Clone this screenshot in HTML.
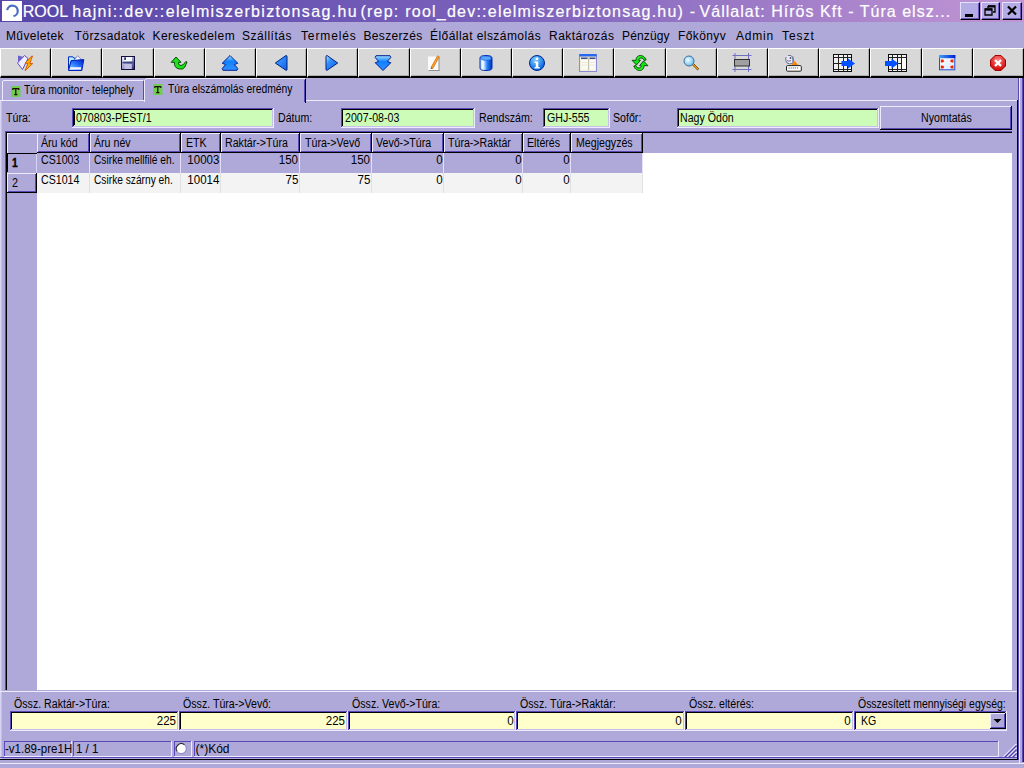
<!DOCTYPE html><html><head><meta charset="utf-8"><style>
*{margin:0;padding:0;box-sizing:border-box}
html,body{width:1024px;height:768px;overflow:hidden;background:#aea9d8;font-family:"Liberation Sans",sans-serif;font-size:11px;color:#000}
.a{position:absolute}
.t{position:absolute;white-space:nowrap;line-height:14px}
#title{left:0;top:0;width:1024px;height:22px;background:linear-gradient(to right,#5646a8 0%,#7c62bc 50%,#c296d4 100%)}
#ttext{left:24px;top:1px;height:20px;color:#fff;font-size:16px;letter-spacing:1px;line-height:20px;white-space:nowrap}
.tb{position:absolute;top:2px;width:20px;height:18px;background:#b4ace4;border-top:1px solid #e4e0ff;border-left:1px solid #e4e0ff;border-right:1px solid #000;border-bottom:1px solid #000;box-shadow:inset -1px -1px 0 #6858b8}
.mi{top:28px;font-size:12px}
.btn{position:absolute;top:48px;height:30px;background:#d8d8d8;border-top:1px solid #fff;border-left:1px solid #fff;border-right:1px solid #000;border-bottom:2px solid #000;box-shadow:inset -1px -1px 0 #b0b0b0}
svg.ic{position:absolute;overflow:visible}
.lbl{top:111px;font-size:12px}
.inp{position:absolute;top:108px;height:20px;background:#ccfcb8;border-top:2px solid #201860;border-left:2px solid #201860;border-bottom:1px solid #e0e0ff;border-right:1px solid #e0e0ff;font-size:12px;line-height:16px;padding-left:1px;white-space:nowrap}
.hd{position:absolute;top:133px;height:20px;border-top:1px solid #e8e4ff;border-left:1px solid #e8e4ff;border-right:1px solid #000;border-bottom:1px solid #000;box-shadow:inset -1px -1px 0 #6058b0;font-size:12px;line-height:17px;padding-left:4px;white-space:nowrap}
.cell{position:absolute;height:20px;font-size:12px;line-height:16px;white-space:nowrap;border-right:1px solid #e8e8f8}
.sl{top:698px;font-size:11px}
.sin{position:absolute;top:711px;height:19px;background:#ffffcc;border-top:2px solid #201860;border-left:2px solid #201860;border-bottom:1px solid #e0e0ff;border-right:1px solid #e0e0ff;font-size:12px;line-height:16px;text-align:right;padding-right:2px;white-space:nowrap}
.st{position:absolute;top:741px;height:15px;border-top:1px solid #5848a8;border-left:1px solid #5848a8;border-right:1px solid #e0dcf8;border-bottom:1px solid #e0dcf8;font-size:12px;line-height:13px;padding-left:1px;white-space:nowrap}
</style></head><body>
<div id="title" class="a"></div>
<div class="a" style="left:2px;top:1px;width:20px;height:20px;background:#fff"></div>
<svg class="ic" style="left:2px;top:1px" width="20" height="20" viewBox="0 0 20 20"><path d="M5.2 9.2 A5.3 5.3 0 1 1 11.5 15.2" fill="none" stroke="#4a6ec0" stroke-width="2.2"/></svg>
<div class="t" style="left:22.8px;letter-spacing:0.00px;top:1.5px;height:20px;font-size:16px;line-height:20px;color:#fff;-webkit-text-stroke:0.2px #fff;transform:scaleY(1.08);transform-origin:0 15.5px;">ROOL</div>
<div class="t" style="left:72.2px;letter-spacing:1.34px;top:1.5px;height:20px;font-size:16px;line-height:20px;color:#fff;-webkit-text-stroke:0.2px #fff;transform:scaleY(1.08);transform-origin:0 15.5px;">hajni::dev::elelmiszerbiztonsag.hu</div>
<div class="t" style="left:360.5px;letter-spacing:1.23px;top:1.5px;height:20px;font-size:16px;line-height:20px;color:#fff;-webkit-text-stroke:0.2px #fff;transform:scaleY(1.08);transform-origin:0 15.5px;">(rep: rool_dev::elelmiszerbiztonsag.hu) -</div>
<div class="t" style="left:699.5px;letter-spacing:1.03px;top:1.5px;height:20px;font-size:16px;line-height:20px;color:#fff;-webkit-text-stroke:0.2px #fff;transform:scaleY(1.08);transform-origin:0 15.5px;">Vállalat: Hírös Kft - Túra elsz...</div>
<div class="tb" style="left:960px;width:20px"></div>
<div class="tb" style="left:981px;width:19px"></div>
<div class="tb" style="left:1002px;width:20px"></div>
<div class="a" style="left:965px;top:14px;width:8px;height:3px;background:#000"></div>
<svg class="ic" style="left:981px;top:2px" width="20" height="18" viewBox="0 0 20 18"><path d="M7 4h7v6h-2M7 4v2M4 7h7v6H4z M4 7.5h7" fill="none" stroke="#000" stroke-width="1.3"/><rect x="7" y="3.5" width="7" height="2" fill="#000"/><rect x="4" y="6.5" width="7" height="2" fill="#000"/></svg>
<svg class="ic" style="left:1002px;top:2px" width="20" height="18" viewBox="0 0 20 18"><path d="M6 4.5l8 8M14 4.5l-8 8" stroke="#000" stroke-width="2.2"/></svg>
<div class="t" style="left:6.00px;top:28.84px;font-size:12.00px;line-height:14px;transform:scaleX(1.000);transform-origin:0 0;letter-spacing:0.362px">Műveletek</div>
<div class="t" style="left:74.60px;top:28.84px;font-size:12.00px;line-height:14px;transform:scaleX(1.000);transform-origin:0 0;letter-spacing:0.420px">Törzsadatok</div>
<div class="t" style="left:152.40px;top:28.84px;font-size:12.00px;line-height:14px;transform:scaleX(1.000);transform-origin:0 0;letter-spacing:0.509px">Kereskedelem</div>
<div class="t" style="left:242.00px;top:28.84px;font-size:12.00px;line-height:14px;transform:scaleX(1.000);transform-origin:0 0;letter-spacing:0.519px">Szállítás</div>
<div class="t" style="left:301.00px;top:28.84px;font-size:12.00px;line-height:14px;transform:scaleX(1.000);transform-origin:0 0;letter-spacing:0.871px">Termelés</div>
<div class="t" style="left:363.50px;top:28.84px;font-size:12.00px;line-height:14px;transform:scaleX(1.000);transform-origin:0 0;letter-spacing:0.331px">Beszerzés</div>
<div class="t" style="left:430.00px;top:28.84px;font-size:12.00px;line-height:14px;transform:scaleX(1.000);transform-origin:0 0;letter-spacing:0.444px">Élőállat elszámolás</div>
<div class="t" style="left:549.00px;top:28.84px;font-size:12.00px;line-height:14px;transform:scaleX(1.000);transform-origin:0 0;letter-spacing:0.467px">Raktározás</div>
<div class="t" style="left:622.00px;top:28.84px;font-size:12.00px;line-height:14px;transform:scaleX(1.000);transform-origin:0 0;letter-spacing:0.133px">Pénzügy</div>
<div class="t" style="left:678.00px;top:28.84px;font-size:12.00px;line-height:14px;transform:scaleX(1.000);transform-origin:0 0;letter-spacing:0.383px">Főkönyv</div>
<div class="t" style="left:736.00px;top:28.84px;font-size:12.00px;line-height:14px;transform:scaleX(1.000);transform-origin:0 0;letter-spacing:0.800px">Admin</div>
<div class="t" style="left:782.00px;top:28.84px;font-size:12.00px;line-height:14px;transform:scaleX(1.000);transform-origin:0 0;letter-spacing:0.950px">Teszt</div>
<div class="btn" style="left:0px;width:51px"></div>
<svg class="ic" style="left:17px;top:55px" width="16" height="16" viewBox="0 0 16 16"><polygon points="0.5,8 7.5,0.5 11,3.5 5.5,14.5" fill="#eeeeff" stroke="#5a50c8" stroke-width="1"/>
<polygon points="1,0.5 1,7 6.5,2" fill="#6a60d0"/>
<polygon points="14.8,1 8,8.3 11,8.3 8,15.8 15.8,8.5 12.8,8.5 15.5,1" fill="#f8b000" stroke="#e05000" stroke-width="0.9"/></svg>
<div class="btn" style="left:51px;width:51px"></div>
<svg class="ic" style="left:68px;top:55px" width="16" height="16" viewBox="0 0 16 16"><defs><linearGradient id="fo" x1="0" y1="1" x2="1" y2="0"><stop offset="0" stop-color="#a0e0ff"/><stop offset="0.5" stop-color="#2878ff"/><stop offset="1" stop-color="#0018c8"/></linearGradient></defs>
<path d="M0.5,1.8 h4.3 l1,1.4 h5.2 v2.3 h-7.5 l-3,9.5 z" fill="#b0f0ff" stroke="#0028c0" stroke-width="1"/>
<polygon points="4,7.5 9.6,0.8 13.2,4.3 8.2,9.5" fill="#fafaff" stroke="#5060c0" stroke-width="0.7"/>
<polygon points="3.2,5.6 15.8,4.6 13.8,15.5 0.5,15.5" fill="url(#fo)" stroke="#0020b8" stroke-width="1" stroke-linejoin="round"/>
<rect x="2.2" y="12.2" width="10.8" height="2.3" fill="#f4f0ff"/></svg>
<div class="btn" style="left:102px;width:52px"></div>
<svg class="ic" style="left:119px;top:55px" width="16" height="16" viewBox="0 0 16 16"><defs><linearGradient id="fl" x1="0" y1="0" x2="1" y2="1"><stop offset="0" stop-color="#f0f0ff"/><stop offset="0.55" stop-color="#9090c8"/><stop offset="1" stop-color="#202060"/></linearGradient></defs>
<rect x="2.5" y="1.5" width="13" height="13" fill="url(#fl)" stroke="#101040" stroke-width="1"/>
<rect x="4.5" y="2" width="8.5" height="4.2" fill="#f8f8ff"/><rect x="5.2" y="2.3" width="1.8" height="2.6" fill="#303070"/>
<rect x="3.5" y="6.8" width="11" height="1.6" fill="#404880"/><rect x="5.3" y="9" width="7.5" height="5" fill="#c0c0e4"/></svg>
<div class="btn" style="left:154px;width:51px"></div>
<svg class="ic" style="left:171px;top:55px" width="16" height="16" viewBox="0 0 16 16"><path d="M5,2 L0.2,7.3 L3.5,7.3 L3.5,9.5 Q4.5,14 9.5,14 L11.5,14 Q14,13.5 16,7 L14.8,6.5 Q12.5,10.5 10,10.5 Q7.5,10.5 7.5,8 L7.5,7.3 L10,7.3 Z" fill="#20e020" stroke="#005000" stroke-width="1"/></svg>
<div class="btn" style="left:205px;width:51px"></div>
<svg class="ic" style="left:222px;top:55px" width="16" height="16" viewBox="0 0 16 16"><defs><linearGradient id="bu" x1="0" y1="0" x2="0" y2="1"><stop offset="0" stop-color="#a0e0ff"/><stop offset="0.4" stop-color="#1080ff"/><stop offset="1" stop-color="#3090ff"/></linearGradient></defs>
<path d="M8,0.5 L15.8,8.3 L12.3,9.5 L15.8,13.5 L15,15.3 L1,15.3 L0.2,13.5 L3.7,9.5 L0.2,8.3 Z" fill="url(#bu)" stroke="#002090" stroke-width="1" stroke-linejoin="round"/></svg>
<div class="btn" style="left:256px;width:51px"></div>
<svg class="ic" style="left:273px;top:55px" width="16" height="16" viewBox="0 0 16 16"><defs><linearGradient id="bl" x1="0" y1="0" x2="1" y2="1"><stop offset="0" stop-color="#c0f0ff"/><stop offset="0.35" stop-color="#3090ff"/><stop offset="1" stop-color="#1060e0"/></linearGradient></defs>
<path d="M2.3,8 L13,0.5 Q14,0.5 14,1.5 L14,14.5 Q14,15.5 13,15.3 Z" fill="url(#bl)" stroke="#002080" stroke-width="1" stroke-linejoin="round"/></svg>
<div class="btn" style="left:307px;width:51px"></div>
<svg class="ic" style="left:324px;top:55px" width="16" height="16" viewBox="0 0 16 16"><path d="M13.7,8 L3,0.5 Q2,0.5 2,1.5 L2,14.5 Q2,15.5 3,15.3 Z" fill="url(#bl)" stroke="#002080" stroke-width="1" stroke-linejoin="round"/></svg>
<div class="btn" style="left:358px;width:52px"></div>
<svg class="ic" style="left:375px;top:55px" width="16" height="16" viewBox="0 0 16 16"><path d="M8,15.5 L15.8,7.7 L12.3,6.5 L15.8,2.5 L15,0.7 L1,0.7 L0.2,2.5 L3.7,6.5 L0.2,7.7 Z" fill="url(#bu)" stroke="#002090" stroke-width="1" stroke-linejoin="round"/></svg>
<div class="btn" style="left:410px;width:51px"></div>
<svg class="ic" style="left:427px;top:55px" width="16" height="16" viewBox="0 0 16 16"><rect x="1" y="1.5" width="11" height="14" fill="#fafafa"/><rect x="11.5" y="2" width="1" height="14" fill="#909090"/><rect x="1.5" y="15" width="11" height="1" fill="#909090"/>
<path d="M4,12.5 L10.5,0.8 L12.3,1.8 L5.8,13.5 Z" fill="#ffa020" stroke="#c06000" stroke-width="0.6"/><path d="M4,12.5 L3.6,14 L5.8,13.5Z" fill="#604020"/></svg>
<div class="btn" style="left:461px;width:51px"></div>
<svg class="ic" style="left:478px;top:55px" width="16" height="16" viewBox="0 0 16 16"><defs><linearGradient id="db" x1="0" y1="0" x2="1" y2="0"><stop offset="0" stop-color="#a0d0ff"/><stop offset="0.25" stop-color="#ffffff"/><stop offset="0.6" stop-color="#2080ff"/><stop offset="1" stop-color="#0030b0"/></linearGradient></defs>
<path d="M2,3 Q2,0.5 8,0.5 Q14,0.5 14,3 L14,13 Q14,15.5 8,15.5 Q2,15.5 2,13 Z" fill="url(#db)" stroke="#0030b0" stroke-width="1"/>
<ellipse cx="8" cy="3.2" rx="5.2" ry="2.1" fill="#58a8ff" stroke="#1050d0" stroke-width="0.6"/></svg>
<div class="btn" style="left:512px;width:51px"></div>
<svg class="ic" style="left:529px;top:55px" width="16" height="16" viewBox="0 0 16 16"><defs><radialGradient id="inf" cx="0.4" cy="0.3" r="0.7"><stop offset="0" stop-color="#80d0ff"/><stop offset="1" stop-color="#0060e0"/></radialGradient></defs>
<circle cx="8" cy="8" r="7.5" fill="url(#inf)" stroke="#002890" stroke-width="1"/>
<circle cx="8" cy="3.8" r="1.4" fill="#fff"/><path d="M5.5,6.5 h3.8 v5.5 h1.4 v1.6 h-5.2 v-1.6 h1.3 v-3.9 h-1.3z" fill="#fff"/></svg>
<div class="btn" style="left:563px;width:51px"></div>
<svg class="ic" style="left:580px;top:55px" width="16" height="16" viewBox="0 0 16 16"><rect x="-0.5" y="-0.5" width="17" height="17" fill="#f4f0d8" stroke="#8a88d8" stroke-width="1"/><rect x="-0.5" y="-1" width="17" height="2.6" fill="#2868f0"/>
<rect x="1" y="1.8" width="14.5" height="1" fill="#e8dcc0"/>
<rect x="1" y="2.6" width="6.5" height="1.3" fill="#283890"/><rect x="9.5" y="2.6" width="6" height="1.3" fill="#283890"/><rect x="8.1" y="3" width="1" height="12.5" fill="#c0b8b0"/>
<rect x="1.5" y="5" width="6" height="9.5" fill="#fbfbf6"/><rect x="9.6" y="5" width="5.6" height="9.5" fill="#fbfbf6"/>
<path d="M2,7.5 h5 M2,10 h5 M10,7.5 h4.5 M10,10 h4.5" stroke="#e8e0c8" stroke-width="0.8"/></svg>
<div class="btn" style="left:614px;width:52px"></div>
<svg class="ic" style="left:631px;top:55px" width="16" height="16" viewBox="0 0 16 16"><defs><linearGradient id="sg" x1="0" y1="0" x2="1" y2="1"><stop offset="0" stop-color="#a0ffa0"/><stop offset="0.4" stop-color="#10f010"/><stop offset="1" stop-color="#00b000"/></linearGradient></defs>
<path id="sa" d="M15.2,5 C14,1.5 11,0.3 9,0.5 C6.5,0.8 5,2.5 5,5.3 L1,5.3 L5.5,10 L9.5,5.3 L7.8,5.3 C7.8,3.8 8.8,3 10,3 C11.5,3 12.5,4 13,5.5 Z" fill="url(#sg)" stroke="#004800" stroke-width="0.9" stroke-linejoin="round"/>
<path d="M15.2,5 C14,1.5 11,0.3 9,0.5 C6.5,0.8 5,2.5 5,5.3 L1,5.3 L5.5,10 L9.5,5.3 L7.8,5.3 C7.8,3.8 8.8,3 10,3 C11.5,3 12.5,4 13,5.5 Z" transform="rotate(180 9 8)" fill="url(#sg)" stroke="#004800" stroke-width="0.9" stroke-linejoin="round"/></svg>
<div class="btn" style="left:666px;width:51px"></div>
<svg class="ic" style="left:683px;top:55px" width="16" height="16" viewBox="0 0 16 16"><defs><radialGradient id="mg" cx="0.4" cy="0.4" r="0.6"><stop offset="0" stop-color="#f0ffff"/><stop offset="1" stop-color="#70c0f0"/></radialGradient></defs>
<path d="M9,9.5 L14.5,15 L15.8,13.8 L10.3,8.3Z" fill="#f0a000" stroke="#604000" stroke-width="0.8"/>
<circle cx="6" cy="6" r="5" fill="url(#mg)" stroke="#4070a0" stroke-width="1"/></svg>
<div class="btn" style="left:717px;width:51px"></div>
<svg class="ic" style="left:734px;top:55px" width="16" height="16" viewBox="0 0 16 16"><path d="M-1.5,0.5 h19 M-1.5,14.5 h19 M1,-2 v19 M14.5,-2 v19" stroke="#7070c0" stroke-width="1"/>
<rect x="0.5" y="4.5" width="15" height="6.5" fill="#a0a0a0" stroke="#303030" stroke-width="1"/></svg>
<div class="btn" style="left:768px;width:51px"></div>
<svg class="ic" style="left:785px;top:55px" width="16" height="16" viewBox="0 0 16 16"><path d="M1,2 Q0,6 2,8 Q4.5,9.5 7.5,8.5 Q9,5 8,2.5 Q6,-0.5 3,0.5" fill="#e8e8f8" stroke="#606080" stroke-width="0.9"/><circle cx="5.5" cy="3" r="0.9" fill="#505070"/><path d="M2,5.5 Q4,7 6,5.5" stroke="#505070" stroke-width="0.8" fill="none"/>
<rect x="7.5" y="1.5" width="0.8" height="5" fill="#5060a0"/>
<polygon points="9.5,5.8 13.2,9.9 6.6,9.9" fill="#f88800"/>
<rect x="1.5" y="10.6" width="14.8" height="5.6" rx="1" fill="#fff" stroke="#202020" stroke-width="1"/><path d="M3.5,13 h10" stroke="#606060" stroke-width="1.2" stroke-dasharray="1.2,0.9"/></svg>
<div class="btn" style="left:819px;width:51px"></div>
<svg class="ic" style="left:836px;top:55px" width="16" height="16" viewBox="0 0 16 16"><rect x="-2.5" y="-0.5" width="18" height="17" fill="#f0f0f0" stroke="#101010" stroke-width="1"/>
<path d="M-2.5,2.5 h18 M-2.5,8.5 h18 M-2.5,14.5 h18 M2.5,-0.5 v17 M7.5,-0.5 v17 M11.5,-0.5 v17" stroke="#202020" stroke-width="1"/>
<polygon points="5.5,6 12,6 12,3.5 19,8.5 12,13.5 12,11 5.5,11" fill="#0050ff"/></svg>
<div class="btn" style="left:870px;width:52px"></div>
<svg class="ic" style="left:887px;top:55px" width="16" height="16" viewBox="0 0 16 16"><rect x="1.5" y="-0.5" width="18" height="17" fill="#f0f0f0" stroke="#101010" stroke-width="1"/>
<path d="M1.5,2.5 h18 M1.5,8.5 h18 M1.5,14.5 h18 M5.5,-0.5 v17 M10.5,-0.5 v17 M14.5,-0.5 v17" stroke="#202020" stroke-width="1"/><rect x="15" y="3" width="4" height="11" fill="#fff"/>
<polygon points="-2,6 4.5,6 4.5,3.5 11.5,8.5 4.5,13.5 4.5,11 -2,11" fill="#0050ff"/></svg>
<div class="btn" style="left:922px;width:51px"></div>
<svg class="ic" style="left:939px;top:55px" width="16" height="16" viewBox="0 0 16 16"><defs><linearGradient id="fs" x1="0" y1="0" x2="1" y2="1"><stop offset="0" stop-color="#ffffff"/><stop offset="1" stop-color="#d8e8ff"/></linearGradient><linearGradient id="fb" x1="0" y1="0" x2="1" y2="0"><stop offset="0" stop-color="#40a0ff"/><stop offset="1" stop-color="#0020d0"/></linearGradient></defs>
<rect x="0.5" y="0.5" width="15.3" height="14.3" fill="url(#fs)" stroke="#2050d0" stroke-width="1"/><rect x="0" y="0" width="16.3" height="3.2" fill="url(#fb)"/>
<path d="M1.8,4.5 h2.5 l1,2 l-2,1 h-1.5z M14.5,4.5 h-2.5 l-1,2 l2,1 h1.5z M1.8,13.5 h2.5 l1,-2 l-2,-1 h-1.5z M14.5,13.5 h-2.5 l-1,-2 l2,-1 h1.5z" fill="#f02808"/></svg>
<div class="btn" style="left:973px;width:51px"></div>
<svg class="ic" style="left:990px;top:55px" width="16" height="16" viewBox="0 0 16 16"><defs><radialGradient id="cl" cx="0.5" cy="0.3" r="0.7"><stop offset="0" stop-color="#ff8080"/><stop offset="1" stop-color="#d00000"/></radialGradient></defs>
<polygon points="5,0.5 11,0.5 15.5,5 15.5,11 11,15.5 5,15.5 0.5,11 0.5,5" fill="url(#cl)" stroke="#a00000" stroke-width="1"/>
<path d="M5,5 L11,11 M11,5 L5,11" stroke="#fff" stroke-width="2.4"/></svg>
<div class="a" style="left:3px;top:80px;width:140px;height:1px;background:#eeeaff;"></div>
<div class="a" style="left:2px;top:81px;width:1px;height:20px;background:#eeeaff;"></div>
<div class="a" style="left:143px;top:81px;width:1px;height:19px;background:#5a48b8;"></div>
<div class="a" style="left:144px;top:81px;width:1px;height:19px;background:#d8d4f4;"></div>
<svg class="ic" style="left:11px;top:86px" width="10" height="11" viewBox="0 0 10 11"><rect width="9.5" height="11" fill="#72cc50"/><path d="M1.8,2.6 h6 M1.8,2.2 v1.8 M7.8,2.2 v1.8 M4.8,2.6 v6.2 M3.2,8.6 h3.2" stroke="#180c08" stroke-width="1.2" fill="none"/></svg>
<div class="t" style="left:23.50px;top:82.84px;font-size:12.00px;line-height:14px;transform:scaleX(0.865);transform-origin:0 0;">Túra monitor - telephely</div>
<div class="a" style="left:144px;top:78px;width:162px;height:24px;background:#aea9d8;"></div>
<div class="a" style="left:146px;top:78px;width:159px;height:1px;background:#eeeaff;"></div>
<div class="a" style="left:144px;top:80px;width:1px;height:22px;background:#eeeaff;"></div>
<div class="a" style="left:145px;top:79px;width:1px;height:1px;background:#eeeaff;"></div>
<div class="a" style="left:305px;top:79px;width:1px;height:24px;background:#000;"></div>
<div class="a" style="left:304px;top:80px;width:1px;height:22px;background:#5a48b8;"></div>
<svg class="ic" style="left:153px;top:84px" width="10" height="11" viewBox="0 0 10 11"><rect width="9.5" height="11" fill="#72cc50"/><path d="M1.8,2.6 h6 M1.8,2.2 v1.8 M7.8,2.2 v1.8 M4.8,2.6 v6.2 M3.2,8.6 h3.2" stroke="#180c08" stroke-width="1.2" fill="none"/></svg>
<div class="t" style="left:167.80px;top:81.64px;font-size:12.00px;line-height:14px;transform:scaleX(0.860);transform-origin:0 0;">Túra elszámolás eredmény</div>
<div class="a" style="left:0px;top:100px;width:144px;height:1px;background:#eeeaff;"></div>
<div class="a" style="left:306px;top:100px;width:711px;height:1px;background:#eeeaff;"></div>
<div class="a" style="left:0px;top:101px;width:1px;height:658px;background:#d8d4f4;"></div>
<div class="a" style="left:1px;top:101px;width:1px;height:658px;background:#c4bcec;"></div>
<div class="a" style="left:1017px;top:100px;width:1px;height:660px;background:#000;"></div>
<div class="a" style="left:1018px;top:78px;width:1px;height:682px;background:#5a48b8;"></div>
<div class="a" style="left:1019px;top:78px;width:1px;height:686px;background:#eeeaff;"></div>
<div class="a" style="left:1022px;top:78px;width:1px;height:684px;background:#5a48b8;"></div>
<div class="a" style="left:1023px;top:78px;width:1px;height:684px;background:#281870;"></div>
<svg class="ic" style="left:1002px;top:744px" width="15" height="14" viewBox="0 0 15 14"><path d="M1,13.5 L14.5,0 M5,13.5 L14.5,4 M9,13.5 L14.5,8 M13,13.5 L14.5,12" stroke="#f0eeff" stroke-width="1.2"/><path d="M2.5,13.5 L14.5,1.5 M6.5,13.5 L14.5,5.5 M10.5,13.5 L14.5,9.5" stroke="#5040b0" stroke-width="1.2"/></svg>
<div class="t" style="left:6.20px;top:110.84px;font-size:12.00px;line-height:14px;transform:scaleX(0.885);transform-origin:0 0;">Túra:</div>
<div class="a" style="left:72px;top:108px;width:202px;height:20px;background:#ccfcb8;"></div><div class="a" style="left:72px;top:108px;width:202px;height:1px;background:#5a48b8;"></div><div class="a" style="left:72px;top:108px;width:1px;height:20px;background:#5a48b8;"></div><div class="a" style="left:73px;top:109px;width:200px;height:1px;background:#000;"></div><div class="a" style="left:73px;top:109px;width:1px;height:18px;background:#000;"></div><div class="a" style="left:72px;top:127px;width:202px;height:1px;background:#eeeaff;"></div><div class="a" style="left:273px;top:108px;width:1px;height:20px;background:#eeeaff;"></div><div class="a" style="left:73px;top:126px;width:200px;height:1px;background:#c8c0ec;"></div><div class="a" style="left:272px;top:109px;width:1px;height:18px;background:#c8c0ec;"></div>
<div class="a" style="left:74px;top:111px;width:1px;height:14px;background:#000;"></div>
<div class="t" style="left:75.50px;top:110.84px;font-size:12.00px;line-height:14px;transform:scaleX(0.885);transform-origin:0 0;">070803-PEST/1</div>
<div class="t" style="left:277.60px;top:110.84px;font-size:12.00px;line-height:14px;transform:scaleX(0.885);transform-origin:0 0;">Dátum:</div>
<div class="a" style="left:341px;top:108px;width:134px;height:20px;background:#ccfcb8;"></div><div class="a" style="left:341px;top:108px;width:134px;height:1px;background:#5a48b8;"></div><div class="a" style="left:341px;top:108px;width:1px;height:20px;background:#5a48b8;"></div><div class="a" style="left:342px;top:109px;width:132px;height:1px;background:#000;"></div><div class="a" style="left:342px;top:109px;width:1px;height:18px;background:#000;"></div><div class="a" style="left:341px;top:127px;width:134px;height:1px;background:#eeeaff;"></div><div class="a" style="left:474px;top:108px;width:1px;height:20px;background:#eeeaff;"></div><div class="a" style="left:342px;top:126px;width:132px;height:1px;background:#c8c0ec;"></div><div class="a" style="left:473px;top:109px;width:1px;height:18px;background:#c8c0ec;"></div>
<div class="t" style="left:344.75px;top:110.84px;font-size:12.00px;line-height:14px;transform:scaleX(0.885);transform-origin:0 0;">2007-08-03</div>
<div class="t" style="left:478.50px;top:110.84px;font-size:12.00px;line-height:14px;transform:scaleX(0.885);transform-origin:0 0;">Rendszám:</div>
<div class="a" style="left:543px;top:108px;width:67px;height:20px;background:#ccfcb8;"></div><div class="a" style="left:543px;top:108px;width:67px;height:1px;background:#5a48b8;"></div><div class="a" style="left:543px;top:108px;width:1px;height:20px;background:#5a48b8;"></div><div class="a" style="left:544px;top:109px;width:65px;height:1px;background:#000;"></div><div class="a" style="left:544px;top:109px;width:1px;height:18px;background:#000;"></div><div class="a" style="left:543px;top:127px;width:67px;height:1px;background:#eeeaff;"></div><div class="a" style="left:609px;top:108px;width:1px;height:20px;background:#eeeaff;"></div><div class="a" style="left:544px;top:126px;width:65px;height:1px;background:#c8c0ec;"></div><div class="a" style="left:608px;top:109px;width:1px;height:18px;background:#c8c0ec;"></div>
<div class="t" style="left:546.50px;top:110.84px;font-size:12.00px;line-height:14px;transform:scaleX(0.885);transform-origin:0 0;">GHJ-555</div>
<div class="t" style="left:613.25px;top:110.84px;font-size:12.00px;line-height:14px;transform:scaleX(0.885);transform-origin:0 0;">Sofőr:</div>
<div class="a" style="left:677px;top:108px;width:202px;height:20px;background:#ccfcb8;"></div><div class="a" style="left:677px;top:108px;width:202px;height:1px;background:#5a48b8;"></div><div class="a" style="left:677px;top:108px;width:1px;height:20px;background:#5a48b8;"></div><div class="a" style="left:678px;top:109px;width:200px;height:1px;background:#000;"></div><div class="a" style="left:678px;top:109px;width:1px;height:18px;background:#000;"></div><div class="a" style="left:677px;top:127px;width:202px;height:1px;background:#eeeaff;"></div><div class="a" style="left:878px;top:108px;width:1px;height:20px;background:#eeeaff;"></div><div class="a" style="left:678px;top:126px;width:200px;height:1px;background:#c8c0ec;"></div><div class="a" style="left:877px;top:109px;width:1px;height:18px;background:#c8c0ec;"></div>
<div class="t" style="left:680.00px;top:110.84px;font-size:12.00px;line-height:14px;transform:scaleX(0.885);transform-origin:0 0;">Nagy Ödön</div>
<div class="a" style="left:880px;top:106px;width:132px;height:24px;background:#aea9d8;"></div><div class="a" style="left:880px;top:106px;width:132px;height:1px;background:#eeeaff;"></div><div class="a" style="left:880px;top:106px;width:1px;height:24px;background:#eeeaff;"></div><div class="a" style="left:880px;top:129px;width:132px;height:1px;background:#000;"></div><div class="a" style="left:1011px;top:106px;width:1px;height:24px;background:#000;"></div><div class="a" style="left:881px;top:128px;width:130px;height:1px;background:#5a48b8;"></div><div class="a" style="left:1010px;top:107px;width:1px;height:22px;background:#5a48b8;"></div>
<div class="t" style="left:921.00px;top:110.84px;font-size:12.00px;line-height:14px;transform:scaleX(0.885);transform-origin:0 0;">Nyomtatás</div>
<div class="a" style="left:5px;top:131px;width:1007px;height:559px;background:#fff;"></div>
<div class="a" style="left:5px;top:131px;width:1007px;height:1px;background:#5a48b8;"></div>
<div class="a" style="left:5px;top:131px;width:1px;height:559px;background:#5a48b8;"></div>
<div class="a" style="left:6px;top:132px;width:1006px;height:1px;background:#000;"></div>
<div class="a" style="left:6px;top:132px;width:1px;height:558px;background:#000;"></div>
<div class="a" style="left:7px;top:133px;width:30px;height:557px;background:#aea9d8;"></div>
<div class="a" style="left:37px;top:133px;width:975px;height:20px;background:#aea9d8;"></div>
<div class="a" style="left:7px;top:133px;width:30px;height:1px;background:#eeeaff;"></div>
<div class="a" style="left:7px;top:133px;width:1px;height:20px;background:#eeeaff;"></div>
<div class="a" style="left:37px;top:133px;width:53px;height:1px;background:#eeeaff;"></div>
<div class="a" style="left:37px;top:133px;width:1px;height:19px;background:#eeeaff;"></div>
<div class="a" style="left:89px;top:133px;width:1px;height:20px;background:#000;"></div>
<div class="a" style="left:88px;top:134px;width:1px;height:18px;background:#5a48b8;"></div>
<div class="a" style="left:37px;top:152px;width:53px;height:1px;background:#000;"></div>
<div class="a" style="left:38px;top:151px;width:51px;height:1px;background:#5a48b8;"></div>
<div class="t" style="left:41.00px;top:135.84px;font-size:12.00px;line-height:14px;transform:scaleX(0.885);transform-origin:0 0;">Áru kód</div>
<div class="a" style="left:90px;top:133px;width:91px;height:1px;background:#eeeaff;"></div>
<div class="a" style="left:90px;top:133px;width:1px;height:19px;background:#eeeaff;"></div>
<div class="a" style="left:180px;top:133px;width:1px;height:20px;background:#000;"></div>
<div class="a" style="left:179px;top:134px;width:1px;height:18px;background:#5a48b8;"></div>
<div class="a" style="left:90px;top:152px;width:91px;height:1px;background:#000;"></div>
<div class="a" style="left:91px;top:151px;width:89px;height:1px;background:#5a48b8;"></div>
<div class="t" style="left:94.00px;top:135.84px;font-size:12.00px;line-height:14px;transform:scaleX(0.885);transform-origin:0 0;">Áru név</div>
<div class="a" style="left:181px;top:133px;width:40px;height:1px;background:#eeeaff;"></div>
<div class="a" style="left:181px;top:133px;width:1px;height:19px;background:#eeeaff;"></div>
<div class="a" style="left:220px;top:133px;width:1px;height:20px;background:#000;"></div>
<div class="a" style="left:219px;top:134px;width:1px;height:18px;background:#5a48b8;"></div>
<div class="a" style="left:181px;top:152px;width:40px;height:1px;background:#000;"></div>
<div class="a" style="left:182px;top:151px;width:38px;height:1px;background:#5a48b8;"></div>
<div class="t" style="left:185.60px;top:135.84px;font-size:12.00px;line-height:14px;transform:scaleX(0.885);transform-origin:0 0;">ETK</div>
<div class="a" style="left:221px;top:133px;width:79px;height:1px;background:#eeeaff;"></div>
<div class="a" style="left:221px;top:133px;width:1px;height:19px;background:#eeeaff;"></div>
<div class="a" style="left:299px;top:133px;width:1px;height:20px;background:#000;"></div>
<div class="a" style="left:298px;top:134px;width:1px;height:18px;background:#5a48b8;"></div>
<div class="a" style="left:221px;top:152px;width:79px;height:1px;background:#000;"></div>
<div class="a" style="left:222px;top:151px;width:77px;height:1px;background:#5a48b8;"></div>
<div class="t" style="left:225.30px;top:135.84px;font-size:12.00px;line-height:14px;transform:scaleX(0.885);transform-origin:0 0;">Raktár-&gt;Túra</div>
<div class="a" style="left:300px;top:133px;width:72px;height:1px;background:#eeeaff;"></div>
<div class="a" style="left:300px;top:133px;width:1px;height:19px;background:#eeeaff;"></div>
<div class="a" style="left:371px;top:133px;width:1px;height:20px;background:#000;"></div>
<div class="a" style="left:370px;top:134px;width:1px;height:18px;background:#5a48b8;"></div>
<div class="a" style="left:300px;top:152px;width:72px;height:1px;background:#000;"></div>
<div class="a" style="left:301px;top:151px;width:70px;height:1px;background:#5a48b8;"></div>
<div class="t" style="left:304.80px;top:135.84px;font-size:12.00px;line-height:14px;transform:scaleX(0.885);transform-origin:0 0;">Túra-&gt;Vevő</div>
<div class="a" style="left:372px;top:133px;width:72px;height:1px;background:#eeeaff;"></div>
<div class="a" style="left:372px;top:133px;width:1px;height:19px;background:#eeeaff;"></div>
<div class="a" style="left:443px;top:133px;width:1px;height:20px;background:#000;"></div>
<div class="a" style="left:442px;top:134px;width:1px;height:18px;background:#5a48b8;"></div>
<div class="a" style="left:372px;top:152px;width:72px;height:1px;background:#000;"></div>
<div class="a" style="left:373px;top:151px;width:70px;height:1px;background:#5a48b8;"></div>
<div class="t" style="left:376.10px;top:135.84px;font-size:12.00px;line-height:14px;transform:scaleX(0.885);transform-origin:0 0;">Vevő-&gt;Túra</div>
<div class="a" style="left:444px;top:133px;width:79px;height:1px;background:#eeeaff;"></div>
<div class="a" style="left:444px;top:133px;width:1px;height:19px;background:#eeeaff;"></div>
<div class="a" style="left:522px;top:133px;width:1px;height:20px;background:#000;"></div>
<div class="a" style="left:521px;top:134px;width:1px;height:18px;background:#5a48b8;"></div>
<div class="a" style="left:444px;top:152px;width:79px;height:1px;background:#000;"></div>
<div class="a" style="left:445px;top:151px;width:77px;height:1px;background:#5a48b8;"></div>
<div class="t" style="left:448.20px;top:135.84px;font-size:12.00px;line-height:14px;transform:scaleX(0.885);transform-origin:0 0;">Túra-&gt;Raktár</div>
<div class="a" style="left:523px;top:133px;width:48px;height:1px;background:#eeeaff;"></div>
<div class="a" style="left:523px;top:133px;width:1px;height:19px;background:#eeeaff;"></div>
<div class="a" style="left:570px;top:133px;width:1px;height:20px;background:#000;"></div>
<div class="a" style="left:569px;top:134px;width:1px;height:18px;background:#5a48b8;"></div>
<div class="a" style="left:523px;top:152px;width:48px;height:1px;background:#000;"></div>
<div class="a" style="left:524px;top:151px;width:46px;height:1px;background:#5a48b8;"></div>
<div class="t" style="left:527.30px;top:135.84px;font-size:12.00px;line-height:14px;transform:scaleX(0.885);transform-origin:0 0;">Eltérés</div>
<div class="a" style="left:571px;top:133px;width:72px;height:1px;background:#eeeaff;"></div>
<div class="a" style="left:571px;top:133px;width:1px;height:19px;background:#eeeaff;"></div>
<div class="a" style="left:642px;top:133px;width:1px;height:20px;background:#000;"></div>
<div class="a" style="left:641px;top:134px;width:1px;height:18px;background:#5a48b8;"></div>
<div class="a" style="left:571px;top:152px;width:72px;height:1px;background:#000;"></div>
<div class="a" style="left:572px;top:151px;width:70px;height:1px;background:#5a48b8;"></div>
<div class="t" style="left:575.50px;top:135.84px;font-size:12.00px;line-height:14px;transform:scaleX(0.885);transform-origin:0 0;">Megjegyzés</div>
<div class="a" style="left:37px;top:153px;width:606px;height:20px;background:#aea9d8;"></div>
<div class="a" style="left:89px;top:153px;width:1px;height:20px;background:#e4e0f8;"></div>
<div class="t" style="left:41.00px;top:152.84px;font-size:12.00px;line-height:14px;transform:scaleX(0.885);transform-origin:0 0;">CS1003</div>
<div class="a" style="left:180px;top:153px;width:1px;height:20px;background:#e4e0f8;"></div>
<div class="t" style="left:94.00px;top:152.84px;font-size:12.00px;line-height:14px;transform:scaleX(0.850);transform-origin:0 0;">Csirke mellfilé eh.</div>
<div class="a" style="left:220px;top:153px;width:1px;height:20px;background:#e4e0f8;"></div>
<div class="t" style="right:804.60px;top:152.84px;font-size:12.00px;line-height:14px;transform:scaleX(0.960);transform-origin:100% 0;">10003</div>
<div class="a" style="left:299px;top:153px;width:1px;height:20px;background:#e4e0f8;"></div>
<div class="t" style="right:725.60px;top:152.84px;font-size:12.00px;line-height:14px;transform:scaleX(0.960);transform-origin:100% 0;">150</div>
<div class="a" style="left:371px;top:153px;width:1px;height:20px;background:#e4e0f8;"></div>
<div class="t" style="right:653.60px;top:152.84px;font-size:12.00px;line-height:14px;transform:scaleX(0.960);transform-origin:100% 0;">150</div>
<div class="a" style="left:443px;top:153px;width:1px;height:20px;background:#e4e0f8;"></div>
<div class="t" style="right:581.60px;top:152.84px;font-size:12.00px;line-height:14px;transform:scaleX(0.960);transform-origin:100% 0;">0</div>
<div class="a" style="left:522px;top:153px;width:1px;height:20px;background:#e4e0f8;"></div>
<div class="t" style="right:502.60px;top:152.84px;font-size:12.00px;line-height:14px;transform:scaleX(0.960);transform-origin:100% 0;">0</div>
<div class="a" style="left:570px;top:153px;width:1px;height:20px;background:#e4e0f8;"></div>
<div class="t" style="right:454.60px;top:152.84px;font-size:12.00px;line-height:14px;transform:scaleX(0.960);transform-origin:100% 0;">0</div>
<div class="a" style="left:642px;top:153px;width:1px;height:20px;background:#e4e0f8;"></div>
<div class="t" style="left:575.50px;top:152.84px;font-size:12.00px;line-height:14px;transform:scaleX(0.885);transform-origin:0 0;"></div>
<div class="a" style="left:37px;top:173px;width:606px;height:20px;background:#f3f3f3;"></div>
<div class="a" style="left:89px;top:173px;width:1px;height:20px;background:#e0e0e0;"></div>
<div class="t" style="left:41.00px;top:172.84px;font-size:12.00px;line-height:14px;transform:scaleX(0.885);transform-origin:0 0;">CS1014</div>
<div class="a" style="left:180px;top:173px;width:1px;height:20px;background:#e0e0e0;"></div>
<div class="t" style="left:94.00px;top:172.84px;font-size:12.00px;line-height:14px;transform:scaleX(0.850);transform-origin:0 0;">Csirke szárny eh.</div>
<div class="a" style="left:220px;top:173px;width:1px;height:20px;background:#e0e0e0;"></div>
<div class="t" style="right:804.60px;top:172.84px;font-size:12.00px;line-height:14px;transform:scaleX(0.960);transform-origin:100% 0;">10014</div>
<div class="a" style="left:299px;top:173px;width:1px;height:20px;background:#e0e0e0;"></div>
<div class="t" style="right:725.60px;top:172.84px;font-size:12.00px;line-height:14px;transform:scaleX(0.960);transform-origin:100% 0;">75</div>
<div class="a" style="left:371px;top:173px;width:1px;height:20px;background:#e0e0e0;"></div>
<div class="t" style="right:653.60px;top:172.84px;font-size:12.00px;line-height:14px;transform:scaleX(0.960);transform-origin:100% 0;">75</div>
<div class="a" style="left:443px;top:173px;width:1px;height:20px;background:#e0e0e0;"></div>
<div class="t" style="right:581.60px;top:172.84px;font-size:12.00px;line-height:14px;transform:scaleX(0.960);transform-origin:100% 0;">0</div>
<div class="a" style="left:522px;top:173px;width:1px;height:20px;background:#e0e0e0;"></div>
<div class="t" style="right:502.60px;top:172.84px;font-size:12.00px;line-height:14px;transform:scaleX(0.960);transform-origin:100% 0;">0</div>
<div class="a" style="left:570px;top:173px;width:1px;height:20px;background:#e0e0e0;"></div>
<div class="t" style="right:454.60px;top:172.84px;font-size:12.00px;line-height:14px;transform:scaleX(0.960);transform-origin:100% 0;">0</div>
<div class="a" style="left:642px;top:173px;width:1px;height:20px;background:#e0e0e0;"></div>
<div class="t" style="left:575.50px;top:172.84px;font-size:12.00px;line-height:14px;transform:scaleX(0.885);transform-origin:0 0;"></div>
<div class="a" style="left:7px;top:153px;width:30px;height:20px;background:#aea9d8;"></div>
<div class="a" style="left:7px;top:153px;width:1px;height:19px;background:#000;"></div>
<div class="a" style="left:7px;top:153px;width:30px;height:1px;background:#000;"></div>
<div class="a" style="left:36px;top:154px;width:1px;height:19px;background:#d8d4f8;"></div>
<div class="t" style="left:11.50px;top:155.84px;font-size:12.00px;line-height:14px;transform:scaleX(0.850);transform-origin:0 0;font-weight:bold;-webkit-text-stroke:0.35px #000">1</div>
<div class="a" style="left:7px;top:173px;width:30px;height:1px;background:#eeeaff;"></div>
<div class="a" style="left:7px;top:173px;width:1px;height:20px;background:#eeeaff;"></div>
<div class="a" style="left:36px;top:173px;width:1px;height:20px;background:#000;"></div>
<div class="a" style="left:7px;top:192px;width:30px;height:1px;background:#000;"></div>
<div class="a" style="left:35px;top:174px;width:1px;height:18px;background:#5a48b8;"></div>
<div class="a" style="left:8px;top:191px;width:28px;height:1px;background:#5a48b8;"></div>
<div class="t" style="left:11.50px;top:175.84px;font-size:12.00px;line-height:14px;transform:scaleX(0.900);transform-origin:0 0;">2</div>
<div class="a" style="left:0px;top:691px;width:1017px;height:1px;background:#eeeaff;"></div>
<div class="t" style="left:14.00px;top:696.84px;font-size:12.00px;line-height:14px;transform:scaleX(0.885);transform-origin:0 0;">Össz. Raktár-&gt;Túra:</div>
<div class="t" style="left:182.50px;top:696.84px;font-size:12.00px;line-height:14px;transform:scaleX(0.885);transform-origin:0 0;">Össz. Túra-&gt;Vevő:</div>
<div class="t" style="left:351.75px;top:696.84px;font-size:12.00px;line-height:14px;transform:scaleX(0.885);transform-origin:0 0;">Össz. Vevő-&gt;Túra:</div>
<div class="t" style="left:519.50px;top:696.84px;font-size:12.00px;line-height:14px;transform:scaleX(0.885);transform-origin:0 0;">Össz. Túra-&gt;Raktár:</div>
<div class="t" style="left:689.00px;top:696.84px;font-size:12.00px;line-height:14px;transform:scaleX(0.885);transform-origin:0 0;">Össz. eltérés:</div>
<div class="t" style="left:857.50px;top:696.84px;font-size:12.00px;line-height:14px;transform:scaleX(0.872);transform-origin:0 0;">Összesített mennyiségi egység:</div>
<div class="a" style="left:10px;top:711px;width:169px;height:20px;background:#ffffcc;"></div><div class="a" style="left:10px;top:711px;width:169px;height:1px;background:#5a48b8;"></div><div class="a" style="left:10px;top:711px;width:1px;height:20px;background:#5a48b8;"></div><div class="a" style="left:11px;top:712px;width:167px;height:1px;background:#000;"></div><div class="a" style="left:11px;top:712px;width:1px;height:18px;background:#000;"></div><div class="a" style="left:10px;top:730px;width:169px;height:1px;background:#eeeaff;"></div><div class="a" style="left:178px;top:711px;width:1px;height:20px;background:#eeeaff;"></div><div class="a" style="left:11px;top:729px;width:167px;height:1px;background:#c8c0ec;"></div><div class="a" style="left:177px;top:712px;width:1px;height:18px;background:#c8c0ec;"></div>
<div class="t" style="right:847.50px;top:713.84px;font-size:12.00px;line-height:14px;transform:scaleX(0.960);transform-origin:100% 0;">225</div>
<div class="a" style="left:179px;top:711px;width:169px;height:20px;background:#ffffcc;"></div><div class="a" style="left:179px;top:711px;width:169px;height:1px;background:#5a48b8;"></div><div class="a" style="left:179px;top:711px;width:1px;height:20px;background:#5a48b8;"></div><div class="a" style="left:180px;top:712px;width:167px;height:1px;background:#000;"></div><div class="a" style="left:180px;top:712px;width:1px;height:18px;background:#000;"></div><div class="a" style="left:179px;top:730px;width:169px;height:1px;background:#eeeaff;"></div><div class="a" style="left:347px;top:711px;width:1px;height:20px;background:#eeeaff;"></div><div class="a" style="left:180px;top:729px;width:167px;height:1px;background:#c8c0ec;"></div><div class="a" style="left:346px;top:712px;width:1px;height:18px;background:#c8c0ec;"></div>
<div class="t" style="right:678.50px;top:713.84px;font-size:12.00px;line-height:14px;transform:scaleX(0.960);transform-origin:100% 0;">225</div>
<div class="a" style="left:348px;top:711px;width:168px;height:20px;background:#ffffcc;"></div><div class="a" style="left:348px;top:711px;width:168px;height:1px;background:#5a48b8;"></div><div class="a" style="left:348px;top:711px;width:1px;height:20px;background:#5a48b8;"></div><div class="a" style="left:349px;top:712px;width:166px;height:1px;background:#000;"></div><div class="a" style="left:349px;top:712px;width:1px;height:18px;background:#000;"></div><div class="a" style="left:348px;top:730px;width:168px;height:1px;background:#eeeaff;"></div><div class="a" style="left:515px;top:711px;width:1px;height:20px;background:#eeeaff;"></div><div class="a" style="left:349px;top:729px;width:166px;height:1px;background:#c8c0ec;"></div><div class="a" style="left:514px;top:712px;width:1px;height:18px;background:#c8c0ec;"></div>
<div class="t" style="right:510.00px;top:713.84px;font-size:12.00px;line-height:14px;transform:scaleX(0.960);transform-origin:100% 0;">0</div>
<div class="a" style="left:516px;top:711px;width:169px;height:20px;background:#ffffcc;"></div><div class="a" style="left:516px;top:711px;width:169px;height:1px;background:#5a48b8;"></div><div class="a" style="left:516px;top:711px;width:1px;height:20px;background:#5a48b8;"></div><div class="a" style="left:517px;top:712px;width:167px;height:1px;background:#000;"></div><div class="a" style="left:517px;top:712px;width:1px;height:18px;background:#000;"></div><div class="a" style="left:516px;top:730px;width:169px;height:1px;background:#eeeaff;"></div><div class="a" style="left:684px;top:711px;width:1px;height:20px;background:#eeeaff;"></div><div class="a" style="left:517px;top:729px;width:167px;height:1px;background:#c8c0ec;"></div><div class="a" style="left:683px;top:712px;width:1px;height:18px;background:#c8c0ec;"></div>
<div class="t" style="right:342.50px;top:713.84px;font-size:12.00px;line-height:14px;transform:scaleX(0.960);transform-origin:100% 0;">0</div>
<div class="a" style="left:685px;top:711px;width:169px;height:20px;background:#ffffcc;"></div><div class="a" style="left:685px;top:711px;width:169px;height:1px;background:#5a48b8;"></div><div class="a" style="left:685px;top:711px;width:1px;height:20px;background:#5a48b8;"></div><div class="a" style="left:686px;top:712px;width:167px;height:1px;background:#000;"></div><div class="a" style="left:686px;top:712px;width:1px;height:18px;background:#000;"></div><div class="a" style="left:685px;top:730px;width:169px;height:1px;background:#eeeaff;"></div><div class="a" style="left:853px;top:711px;width:1px;height:20px;background:#eeeaff;"></div><div class="a" style="left:686px;top:729px;width:167px;height:1px;background:#c8c0ec;"></div><div class="a" style="left:852px;top:712px;width:1px;height:18px;background:#c8c0ec;"></div>
<div class="t" style="right:173.00px;top:713.84px;font-size:12.00px;line-height:14px;transform:scaleX(0.960);transform-origin:100% 0;">0</div>
<div class="a" style="left:854px;top:711px;width:153px;height:20px;background:#ffffcc;"></div><div class="a" style="left:854px;top:711px;width:153px;height:1px;background:#5a48b8;"></div><div class="a" style="left:854px;top:711px;width:1px;height:20px;background:#5a48b8;"></div><div class="a" style="left:855px;top:712px;width:151px;height:1px;background:#000;"></div><div class="a" style="left:855px;top:712px;width:1px;height:18px;background:#000;"></div><div class="a" style="left:854px;top:730px;width:153px;height:1px;background:#eeeaff;"></div><div class="a" style="left:1006px;top:711px;width:1px;height:20px;background:#eeeaff;"></div><div class="a" style="left:855px;top:729px;width:151px;height:1px;background:#c8c0ec;"></div><div class="a" style="left:1005px;top:712px;width:1px;height:18px;background:#c8c0ec;"></div>
<div class="t" style="left:860.50px;top:713.84px;font-size:12.00px;line-height:14px;transform:scaleX(0.885);transform-origin:0 0;">KG</div>
<div class="a" style="left:990px;top:713px;width:16px;height:16px;background:#aea9d8;"></div><div class="a" style="left:990px;top:713px;width:16px;height:1px;background:#eeeaff;"></div><div class="a" style="left:990px;top:713px;width:1px;height:16px;background:#eeeaff;"></div><div class="a" style="left:990px;top:728px;width:16px;height:1px;background:#000;"></div><div class="a" style="left:1005px;top:713px;width:1px;height:16px;background:#000;"></div><div class="a" style="left:991px;top:727px;width:14px;height:1px;background:#5a48b8;"></div><div class="a" style="left:1004px;top:714px;width:1px;height:14px;background:#5a48b8;"></div>
<svg class="ic" style="left:990px;top:713px" width="16" height="16" viewBox="0 0 16 16"><polygon points="3.5,6 11.5,6 7.5,10" fill="#000"/></svg>
<div class="a" style="left:4px;top:741px;width:68px;height:16px;background:#aea9d8;"></div><div class="a" style="left:4px;top:741px;width:68px;height:1px;background:#5a48b8;"></div><div class="a" style="left:4px;top:741px;width:1px;height:16px;background:#5a48b8;"></div><div class="a" style="left:4px;top:756px;width:68px;height:1px;background:#eeeaff;"></div><div class="a" style="left:71px;top:741px;width:1px;height:16px;background:#eeeaff;"></div>
<div class="a" style="left:73px;top:741px;width:99px;height:16px;background:#aea9d8;"></div><div class="a" style="left:73px;top:741px;width:99px;height:1px;background:#5a48b8;"></div><div class="a" style="left:73px;top:741px;width:1px;height:16px;background:#5a48b8;"></div><div class="a" style="left:73px;top:756px;width:99px;height:1px;background:#eeeaff;"></div><div class="a" style="left:171px;top:741px;width:1px;height:16px;background:#eeeaff;"></div>
<div class="a" style="left:174px;top:741px;width:18px;height:16px;background:#aea9d8;"></div><div class="a" style="left:174px;top:741px;width:18px;height:1px;background:#5a48b8;"></div><div class="a" style="left:174px;top:741px;width:1px;height:16px;background:#5a48b8;"></div><div class="a" style="left:174px;top:756px;width:18px;height:1px;background:#eeeaff;"></div><div class="a" style="left:191px;top:741px;width:1px;height:16px;background:#eeeaff;"></div>
<div class="a" style="left:194px;top:741px;width:805px;height:16px;background:#aea9d8;"></div><div class="a" style="left:194px;top:741px;width:805px;height:1px;background:#5a48b8;"></div><div class="a" style="left:194px;top:741px;width:1px;height:16px;background:#5a48b8;"></div><div class="a" style="left:194px;top:756px;width:805px;height:1px;background:#eeeaff;"></div><div class="a" style="left:998px;top:741px;width:1px;height:16px;background:#eeeaff;"></div>
<div class="t" style="left:4.50px;top:741.84px;font-size:12.00px;line-height:14px;transform:scaleX(0.960);transform-origin:0 0;">-v1.89-pre1H</div>
<div class="t" style="left:75.50px;top:741.84px;font-size:12.00px;line-height:14px;transform:scaleX(0.960);transform-origin:0 0;">1 / 1</div>
<svg class="ic" style="left:175px;top:742px" width="14" height="14" viewBox="0 0 14 14"><circle cx="6" cy="6.5" r="5" fill="#fff"/><path d="M2.2,9.5 A5,5 0 0 1 9.5,2.8" stroke="#303030" stroke-width="1.2" fill="none"/><path d="M2.5,10 A5,5 0 0 0 10,3.2" stroke="#8078c8" stroke-width="0.8" fill="none"/></svg>
<div class="t" style="left:195.50px;top:741.84px;font-size:12.00px;line-height:14px;transform:scaleX(1.000);transform-origin:0 0;">(*)Kód</div>
<div class="a" style="left:0px;top:757px;width:1017px;height:1px;background:#5a48b8;"></div>
<div class="a" style="left:0px;top:759px;width:1018px;height:1px;background:#000;"></div>
<div class="a" style="left:0px;top:763px;width:1024px;height:1px;background:#eeeaff;"></div>
</body></html>
